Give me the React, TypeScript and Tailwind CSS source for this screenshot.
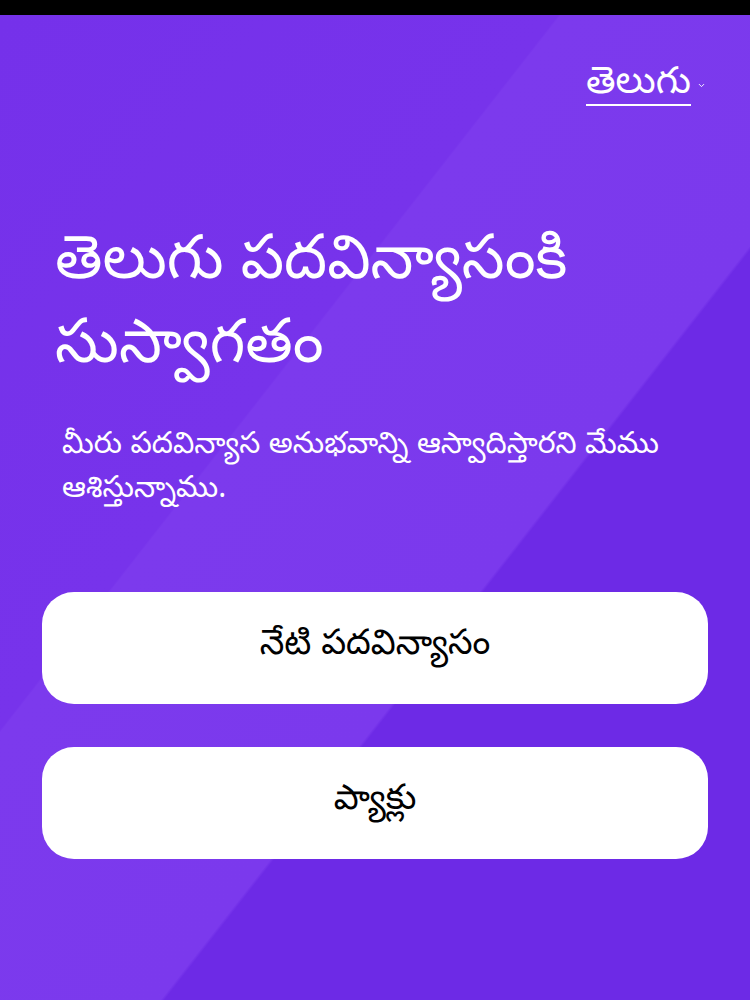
import { ChevronDown } from "lucide-react";

const telugu = { fontFamily: '"Noto Sans Telugu", "Noto Sans", sans-serif' };

export default function App() {
  return (
    <div className="w-[750px] h-[1000px] flex flex-col bg-black overflow-hidden" style={telugu}>
      {/* status bar */}
      <div className="h-[15px] shrink-0 bg-black" />

      <main className="flex-1 flex flex-col bg-[linear-gradient(128deg,#7531ea_0px,#7733eb_440px,#7c3aed_442px,#7b39ed_733px,#6d2ae6_736px,#6d2ae6_100%)]">
        {/* language picker */}
        <div className="flex justify-end pt-[53px] pr-[44px]">
          <button className="flex items-center gap-[6px] text-white">
            <span className="text-[38px] leading-[36px] border-b-2 border-white">తెలుగు</span>
            <ChevronDown className="w-[9px] h-[9px] -mt-[4px]" strokeWidth={2.5} />
          </button>
        </div>

        {/* welcome */}
        <section className="px-[55px] pt-[118px]">
          <h1 className="text-white text-[61px] leading-[84px] font-normal">
            తెలుగు పదవిన్యాసంకి సుస్వాగతం
          </h1>
          <p className="text-white text-[30px] leading-[44px] mt-[33px] pl-[7px]">
            మీరు పదవిన్యాస అనుభవాన్ని ఆస్వాదిస్తారని మేము ఆశిస్తున్నాము.
          </p>
        </section>

        {/* actions */}
        <div className="flex flex-col gap-[43px] px-[42px] pt-[79px]">
          <button className="h-[112px] rounded-[32px] bg-white text-black text-[35px]">
            నేటి పదవిన్యాసం
          </button>
          <button className="h-[112px] rounded-[32px] bg-white text-black text-[35px]">
            ప్యాక్లు
          </button>
        </div>
      </main>
    </div>
  );
}
